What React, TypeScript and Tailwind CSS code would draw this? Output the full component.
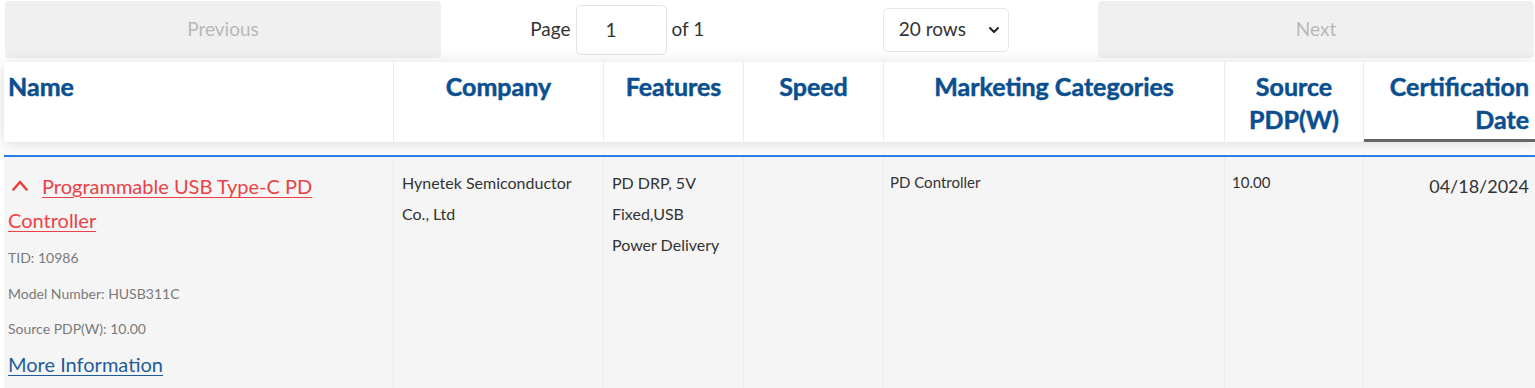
import { ChevronDown } from "lucide-react";

type Column = {
  key: string;
  label: string[];
  width: string;
  align: "left" | "center" | "right";
  sorted?: boolean;
};

const columns: Column[] = [
  { key: "name", label: ["Name"], width: "w-[390px]", align: "left" },
  { key: "company", label: ["Company"], width: "w-[210px]", align: "center" },
  { key: "features", label: ["Features"], width: "w-[140px]", align: "center" },
  { key: "speed", label: ["Speed"], width: "w-[140px]", align: "center" },
  { key: "marketing", label: ["Marketing Categories"], width: "w-[341px]", align: "center" },
  { key: "pdp", label: ["Source", "PDP(W)"], width: "w-[139px]", align: "center" },
  { key: "date", label: ["Certification", "Date"], width: "w-[171px]", align: "right", sorted: true },
];

const alignClass = {
  left: "text-left pl-[4px]",
  center: "text-center",
  right: "text-right pr-[6px]",
};

function PagerButton({ label }: { label: string }) {
  return (
    <button
      disabled
      className="h-[57px] w-[436px] cursor-not-allowed rounded-[4px] bg-[#f0f0f0] text-[19px] text-[#b8b8b8]"
    >
      {label}
    </button>
  );
}

function Pagination() {
  return (
    <div className="flex items-start pt-[1px]">
      <PagerButton label="Previous" />
      <div className="flex flex-1 items-center justify-around self-stretch">
        <div className="flex items-center gap-[5px] text-[19px] text-[#333]">
          <span>Page</span>
          <input
            readOnly
            value="1"
            className="h-[50px] w-[91px] rounded-[5px] border border-[#e3e3e3] bg-white pl-[29px] text-[19px] text-[#333] outline-none"
          />
          <span>of 1</span>
        </div>
        <div className="flex h-[44px] w-[126px] items-center justify-between rounded-[5px] border border-[#e6e6e6] bg-white pl-[15px] pr-[6px] text-[19px] text-[#333]">
          <span>20 rows</span>
          <ChevronDown className="h-[16px] w-[16px] text-[#222]" strokeWidth={3} />
        </div>
      </div>
      <PagerButton label="Next" />
    </div>
  );
}

function Header() {
  return (
    <div className="relative z-10 mt-[4px] flex h-[80px] bg-white shadow-[0_2px_15px_0_rgba(0,0,0,0.15)]">
      {columns.map((col, i) => (
        <div
          key={col.key}
          className={`${col.width} ${alignClass[col.align]} ${
            i < columns.length - 1 ? "border-r border-[#ececec]" : ""
          } ${col.sorted ? "border-b-[3px] border-b-[#666]" : ""} pt-[8px] text-[25px] font-bold leading-[33px] text-[#0b4f8f] [-webkit-text-stroke:0.5px_#0b4f8f]`}
        >
          {col.label.map((line) => (
            <div key={line}>{line}</div>
          ))}
        </div>
      ))}
    </div>
  );
}

function Cell({ width, last, children }: { width: string; last?: boolean; children?: React.ReactNode }) {
  return (
    <div className={`${width} ${last ? "" : "border-r border-[#ebebeb]"} shrink-0`}>{children}</div>
  );
}

function Row() {
  return (
    <div className="flex h-[240px] bg-[#f5f5f5] text-[#333]">
      <Cell width="w-[390px]">
        <div className="pl-[4px] pt-[12px]">
          <div className="text-[20px] leading-[34px]">
            <svg
              viewBox="0 0 16 11"
              className="mr-[14px] ml-[4px] inline-block h-[11px] w-[16px] align-[3px]"
              fill="none"
              stroke="#e8413f"
              strokeWidth={2.6}
              strokeLinecap="round"
              strokeLinejoin="round"
            >
              <polyline points="1.5,9.5 8,2 14.5,9.5" />
            </svg>
            <a
              href="#"
              className="text-[#ec4245] underline decoration-1 underline-offset-[3px]"
            >
              Programmable USB Type-C PD Controller
            </a>
          </div>
          <div className="mt-[3px] text-[14px] leading-[35.5px] text-[#7a7a7a]">
            <div>TID: 10986</div>
            <div>Model Number: HUSB311C</div>
            <div>Source PDP(W): 10.00</div>
          </div>
          <a
            href="#"
            className="block text-[20px] leading-[34px] text-[#1f5c9c] underline decoration-1 underline-offset-[3px]"
          >
            More Information
          </a>
        </div>
      </Cell>
      <Cell width="w-[210px]">
        <div className="pl-[8px] pt-[10px] text-[16px] leading-[31px]">
          Hynetek Semiconductor
          <br />
          Co., Ltd
        </div>
      </Cell>
      <Cell width="w-[140px]">
        <div className="pl-[8px] pt-[10px] text-[16px] leading-[31px]">
          PD DRP, 5V
          <br />
          Fixed,USB
          <br />
          Power Delivery
        </div>
      </Cell>
      <Cell width="w-[140px]" />
      <Cell width="w-[341px]">
        <div className="pl-[6px] pt-[12px] text-[15px] leading-[26px]">PD Controller</div>
      </Cell>
      <Cell width="w-[139px]">
        <div className="pl-[7px] pt-[12px] text-[15px] leading-[26px]">10.00</div>
      </Cell>
      <Cell width="w-[171px]" last>
        <div className="pr-[6px] pt-[15px] text-right text-[18px] leading-[28px]">04/18/2024</div>
      </Cell>
    </div>
  );
}

export default function App() {
  return (
    <div className="h-[388px] w-[1535px] overflow-hidden bg-white pl-[4px] font-['Lato',sans-serif]">
      <div className="pl-[1px] pr-[1px]">
        <Pagination />
      </div>
      <Header />
      <div className="h-[13px]" />
      <div className="h-[2px] bg-[#2b7de9]" />
      <Row />
    </div>
  );
}
